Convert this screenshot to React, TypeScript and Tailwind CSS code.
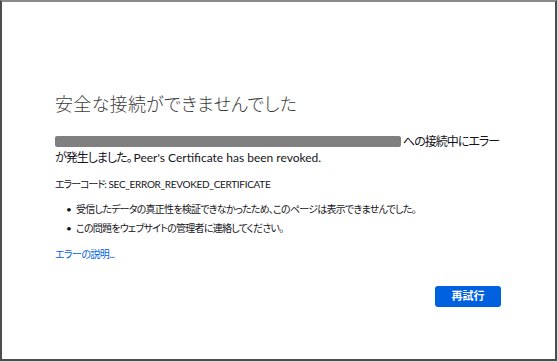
const FONT = "font-['Lato','Noto_Sans_CJK_JP',sans-serif] [font-feature-settings:'palt']";

const bullets = [
  "受信したデータの真正性を検証できなかったため、このページは表示できませんでした。",
  "この問題をウェブサイトの管理者に連絡してください。",
];

export default function App() {
  return (
    <div className={`h-[362px] w-[558px] bg-[#d9d9d9] ${FONT}`}>
      <div className="h-[361px] w-[557px] border-2 border-[#4d4d4d] border-t-[#8a8a8a] bg-white">
        <div className="flex w-[499px] flex-col pl-[53px] pt-[90px] text-[#15141a]">
          <h1 className="text-[18px] leading-[24px] font-light tracking-[0.3px] text-[#3c3c3c]">
            安全な接続ができませんでした
          </h1>

          <p className="mt-[18px] text-[12px] leading-[16px]">
            <span className="inline-block h-[11px] w-[346px] rounded-[2px] bg-[#808080] align-[-1px]" />
            <span className="tracking-[-1px]"> への接続中にエラー</span>
            <br />
            <span className="tracking-[-1px]">が発生しました。</span>
            <span className="ml-[2px]">Peer's Certificate has been revoked.</span>
          </p>

          <p className="mt-[10px] text-[10px] leading-[16px]">
            <span className="tracking-[-1px]">エラーコード:</span>{" "}
            <span className="tracking-[-0.3px]">SEC_ERROR_REVOKED_CERTIFICATE</span>
          </p>

          <ul className="mt-[8px] text-[10px] leading-[19px] tracking-[-0.75px]">
            {bullets.map((b) => (
              <li key={b} className="flex pl-[11px]">
                <span className="w-[10px] shrink-0">•</span>
                <span>{b}</span>
              </li>
            ))}
          </ul>

          <a className="mt-[8px] text-[10px] leading-[16px] tracking-[-0.6px] text-[#0061e0]">エラーの説明...</a>

          <div className="mt-[24px] flex justify-end">
            <button className="h-[21px] w-[66px] rounded-[3px] bg-[#0061e0] text-[11px] font-bold text-white">
              再試行
            </button>
          </div>
        </div>
      </div>
    </div>
  );
}
